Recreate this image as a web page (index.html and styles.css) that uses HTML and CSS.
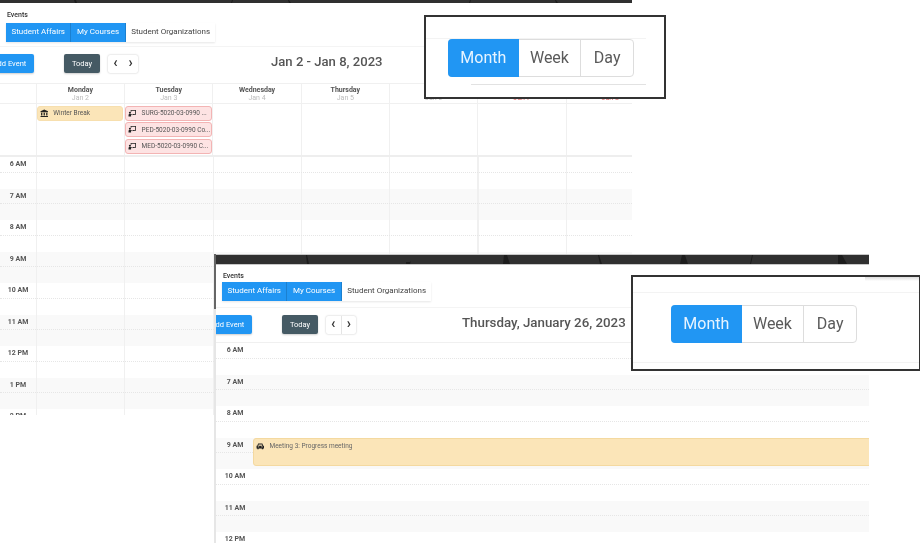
FILE: index.html
```html
<!DOCTYPE html>
<html lang="en">
<head>
    <meta charset="UTF-8">
    <meta name="viewport" content="width=device-width, initial-scale=1.0">
    <title>Events Calendar</title>
    <link rel="stylesheet" href="styles.css">
</head>
<body>
    <svg class="icon-defs" width="0" height="0" aria-hidden="true">
        <symbol id="icon-landmark" viewBox="0 0 16 16">
            <path d="M8 1l7 3v2H1V4zM2 7h2.4v5H2zM6.8 7h2.4v5H6.8zM11.600 7H14v5h-2.400zM1 13h14v2H1z"/>
        </symbol>
        <symbol id="icon-teacher" viewBox="0 0 16 16">
            <path d="M5 2h10v9H9.500v-1.400h4V3.400H6.400V5H5z"/>
            <circle cx="3.600" cy="7" r="2"/>
            <path d="M1 14v-3c0-1 .8-1.700 1.700-1.700h2L8 10.500v1.200L5.800 11v3zM8.500 10h3v1.400h-3z"/>
        </symbol>
        <symbol id="icon-car" viewBox="0 0 16 16">
            <path d="M4 3h8l1.600 4H15v5h-1.500v1.500h-2.500V12H5v1.500H2.500V12H1V7h1.400zM5 4.500L4.200 7h7.600L11 4.500zM3.500 8.500v1.500H6V8.500zM10 8.500v1.500h2.500V8.500z"/>
        </symbol>
    </svg>

    <!-- first screenshot: week view -->
    <section class="shot shot-week">
        <svg class="photo-strip" viewBox="0 0 632 3" preserveAspectRatio="none" aria-hidden="true">
            <path d="M74 0h2l1 3h-2zM232 0h1l-1 3h-1zM288 0h1l2 3h-2zM470 0h1l-1 3h-1zM555 0h1l2 3h-2z"/>
        </svg>
        <div class="events-head">
            <div class="events-label">Events</div>
            <div class="tabs">
                <span class="tab active">Student Affairs</span>
                <span class="tab active">My Courses</span>
                <span class="tab">Student Organizations</span>
            </div>
        </div>
        <div class="toolbar">
            <button class="add-btn">Add Event</button>
            <button class="today-btn">Today</button>
            <div class="pager"><span>&#8249;</span><span>&#8250;</span></div>
            <h2 class="range-title">Jan 2 - Jan 8, 2023</h2>
        </div>
        <div class="week-head">
            <div class="day-head"></div>
            <div class="day-head"><b>Monday</b><small>Jan 2</small></div>
            <div class="day-head"><b>Tuesday</b><small>Jan 3</small></div>
            <div class="day-head"><b>Wednesday</b><small>Jan 4</small></div>
            <div class="day-head"><b>Thursday</b><small>Jan 5</small></div>
            <div class="day-head"><b>Friday</b><small>Jan 6</small></div>
            <div class="day-head"><b>Saturday</b><small class="holiday">Jan 7</small></div>
            <div class="day-head"><b>Sunday</b><small class="holiday">Jan 8</small></div>
        </div>
        <div class="all-day">
            <div class="all-day-cell"></div>
            <div class="all-day-cell">
                <div class="chip chip-break"><svg class="chip-icon"><use href="#icon-landmark"/></svg><span>Winter Break</span></div>
            </div>
            <div class="all-day-cell">
                <div class="chip chip-course"><svg class="chip-icon"><use href="#icon-teacher"/></svg><span>SURG-5020-03-0990 ...</span></div>
                <div class="chip chip-course"><svg class="chip-icon"><use href="#icon-teacher"/></svg><span>PED-5020-03-0990 Co...</span></div>
                <div class="chip chip-course"><svg class="chip-icon"><use href="#icon-teacher"/></svg><span>MED-5020-03-0990 C...</span></div>
            </div>
            <div class="all-day-cell"></div>
            <div class="all-day-cell"></div>
            <div class="all-day-cell"></div>
            <div class="all-day-cell"></div>
            <div class="all-day-cell"></div>
        </div>
        <div class="hours hours-week">
            <div class="hour"><div class="slot"><span class="hour-label">6 AM</span></div></div>
            <div class="hour"><div class="slot"><span class="hour-label">7 AM</span></div></div>
            <div class="hour"><div class="slot"><span class="hour-label">8 AM</span></div></div>
            <div class="hour"><div class="slot"><span class="hour-label">9 AM</span></div></div>
            <div class="hour"><div class="slot"><span class="hour-label">10 AM</span></div></div>
            <div class="hour"><div class="slot"><span class="hour-label">11 AM</span></div></div>
            <div class="hour"><div class="slot"><span class="hour-label">12 PM</span></div></div>
            <div class="hour"><div class="slot"><span class="hour-label">1 PM</span></div></div>
            <div class="hour"><div class="slot"><span class="hour-label">2 PM</span></div></div>
        </div>
    </section>

    <!-- second screenshot: day view -->
    <section class="shot shot-day">
        <svg class="photo-strip" viewBox="0 0 653 9" preserveAspectRatio="none" aria-hidden="true">
            <path d="M90 0h1l2 9h-2zM190 7h4l1-1-1 3h-4zM288 0h3l3 9h-7zM382 0h1l3 9h-2zM466 0h3l3 9h-8zM536 0h1l-2 9h-1zM622 0h4l5 9h-9z"/>
        </svg>
        <div class="events-head">
            <div class="events-label">Events</div>
            <div class="tabs">
                <span class="tab active">Student Affairs</span>
                <span class="tab active">My Courses</span>
                <span class="tab">Student Organizations</span>
            </div>
        </div>
        <div class="toolbar">
            <button class="add-btn">Add Event</button>
            <button class="today-btn">Today</button>
            <div class="pager"><span>&#8249;</span><span>&#8250;</span></div>
            <h2 class="range-title">Thursday, January 26, 2023</h2>
        </div>
        <div class="hours hours-day">
            <div class="hour"><div class="slot"><span class="hour-label">6 AM</span></div></div>
            <div class="hour"><div class="slot"><span class="hour-label">7 AM</span></div></div>
            <div class="hour"><div class="slot"><span class="hour-label">8 AM</span></div></div>
            <div class="hour">
                <div class="slot"><span class="hour-label">9 AM</span></div>
                <div class="meeting"><svg class="chip-icon"><use href="#icon-car"/></svg><span>Meeting 3: Progress meeting</span></div>
            </div>
            <div class="hour"><div class="slot"><span class="hour-label">10 AM</span></div></div>
            <div class="hour"><div class="slot"><span class="hour-label">11 AM</span></div></div>
            <div class="hour"><div class="slot"><span class="hour-label">12 PM</span></div></div>
        </div>
    </section>

    <!-- zoomed callouts of the view switcher -->
    <aside class="callout callout-week">
        <div class="callout-line line-top"></div>
        <div class="view-switch">
            <span class="view active">Month</span>
            <span class="view view-week">Week</span>
            <span class="view view-day">Day</span>
        </div>
        <div class="callout-line line-bottom"></div>
    </aside>
    <aside class="callout callout-day">
        <div class="callout-line line-top"></div>
        <div class="view-switch">
            <span class="view active">Month</span>
            <span class="view view-week">Week</span>
            <span class="view view-day">Day</span>
        </div>
        <div class="callout-line line-bottom"></div>
    </aside>
</body>
</html>
```

FILE: styles.css
```css
* {
    box-sizing: border-box;
}
html, body {
    margin: 0;
    height: 100%;
}
body {
    position: relative;
    overflow: hidden;
    background-color: #fff;
    font-family: Roboto, "Liberation Sans", sans-serif;
    color: #444;
}
.icon-defs {
    position: absolute;
}

/* screenshots sit on a free canvas */
.shot {
    position: absolute;
    overflow: hidden;
    background-color: #fff;
    filter: blur(0.45px);
}
.shot-week {
    left: 0;
    top: 0;
    width: 632px;
    height: 415px;
}
.shot-day {
    left: 214px;
    top: 254px;
    width: 655px;
    height: 289px;
    border-left: 2px solid #e6e6e6;
    border-image: linear-gradient(#666 0 56px, #e6e6e6 56px) 1;
}
.photo-strip {
    display: block;
    width: 100%;
    background-color: #303030;
    fill: #1c1c1c;
}
.shot-week .photo-strip {
    height: 3px;
}
.shot-day .photo-strip {
    height: 11px;
    border-top: 1px solid #c8c8c8;
    border-bottom: 1px solid #c8c8c8;
}

.events-head {
    display: flex;
    flex-direction: column;
    align-items: flex-start;
    height: 44px;
    padding-left: 6px;
    border-bottom: 1px solid #f4f4f4;
}
.shot-week .events-head {
    padding-top: 9px;
}
.shot-day .events-head {
    height: 43px;
    padding-top: 8px;
}
.events-label {
    height: 11px;
    margin-left: 1px;
    font-size: 7px;
    font-weight: 500;
    line-height: 6px;
    color: #333;
}
.shot-day .events-label {
    height: 9px;
}
.tabs {
    display: flex;
    box-shadow: 0 1px 2px rgba(0, 0, 0, 0.1);
}
.tab {
    height: 18.500px;
    padding: 0 4.500px 0 5.500px;
    font-size: 8px;
    line-height: 18px;
    color: #444;
    background-color: #fff;
}
.tab.active {
    padding: 0 5.500px;
    color: #fff;
    background-color: #2196f3;
    border-right: 1px solid #1b80d0;
}

.toolbar {
    display: flex;
    align-items: flex-start;
    height: 36px;
    padding-top: 7px;
}
.shot-day .toolbar {
    height: 35px;
    border-bottom: 1px solid #f0f0f0;
}
button {
    height: 19px;
    padding: 0;
    border: none;
    border-radius: 2px;
    font-family: inherit;
    font-size: 7.500px;
    color: #fff;
    box-shadow: 0 1px 2px rgba(0, 0, 0, 0.2);
}
.add-btn {
    width: 49px;
    background-color: #2196f3;
}
.shot-week .add-btn {
    margin-left: -15px;
}
.shot-day .add-btn {
    margin-left: -13px;
}
.today-btn {
    width: 36px;
    margin-left: 30px;
    background-color: #455a64;
}
.pager {
    display: flex;
    width: 30px;
    height: 18px;
    margin: 1px 0 0 8px;
    border-radius: 2px;
    box-shadow: 0 0 2px rgba(0, 0, 0, 0.25);
}
.pager span {
    flex: 1;
    font-size: 14px;
    font-weight: 700;
    line-height: 15px;
    text-align: center;
    color: #333;
}
.shot-day .pager span + span {
    border-left: 1px solid #e4e4e4;
}
.range-title {
    margin: 0;
    font-size: 13.100px;
    font-weight: 500;
    line-height: 15px;
    color: #555;
}
.shot-week .range-title {
    margin-left: 133px;
}
.shot-day .range-title {
    margin: 0 0 0 106px;
    font-size: 13.300px;
}

.week-head, .all-day {
    display: grid;
    grid-template-columns: 36.800px repeat(7, 88.300px);
}
.week-head {
    height: 21px;
    border-top: 1px solid #f0f0f0;
    border-bottom: 1px solid #f0f0f0;
}
.day-head {
    display: flex;
    flex-direction: column;
    align-items: center;
    border-right: 1px solid #f0f0f0;
    padding-top: 2px;
    font-size: 7px;
    line-height: 8px;
}
.day-head b {
    font-weight: 700;
    color: #555;
}
.day-head small {
    font-size: 7px;
    color: #bbb;
}
.day-head small.holiday {
    color: #d66;
}
.all-day {
    height: 53px;
    border-bottom: 2px solid #eee;
}
.all-day-cell {
    display: flex;
    flex-direction: column;
    gap: 1.500px;
    padding: 1.500px 0 0;
    border-right: 1px solid #f0f0f0;
}
.chip {
    display: flex;
    align-items: center;
    height: 15px;
    border-radius: 3px;
    font-size: 6.500px;
    color: #555;
}
.chip-break {
    background-color: #fbe5b8;
    border: 1px solid #f7dfae;
    margin-right: 1px;
}
.chip-course {
    background-color: #fde3e3;
    border: 1.500px solid #f3b4b4;
}
.chip-icon {
    flex: none;
    width: 8.500px;
    height: 8.500px;
    margin: 0 5px 0 2px;
    fill: #222;
}

.hour {
    position: relative;
    height: 31.500px;
    background-repeat: no-repeat;
}
.hour:nth-child(even) {
    background-color: #f9f9f9;
}
.hours-week .hour {
    background-image: repeating-linear-gradient(90deg, #f0f0f0 0 1px, transparent 1px 88.300px);
    background-position: 35.800px 0;
}
.slot {
    height: 15.750px;
    border-bottom: 1px dotted #e6e6e6;
}
.hour-label {
    display: block;
    width: 36px;
    font-size: 7px;
    font-weight: 700;
    line-height: 14px;
    text-align: center;
    color: #555;
}
.shot-day .hour-label {
    width: 38px;
}
.meeting {
    position: absolute;
    top: 0;
    left: 37px;
    right: -4px;
    display: flex;
    align-items: flex-start;
    height: 28px;
    padding-top: 3px;
    border: 1px solid #f4d9a0;
    border-radius: 3px;
    background-color: #fbe5b8;
    font-size: 6.500px;
    line-height: 8px;
    color: #666;
}

/* callouts lie over the screenshots */
.callout {
    position: absolute;
    background-color: #fff;
    border: 2px solid #333;
    filter: blur(0.3px);
}
.callout-week {
    left: 424px;
    top: 15px;
    width: 242px;
    height: 84px;
}
.callout-day {
    left: 631px;
    top: 275px;
    width: 289px;
    height: 96px;
    border-right-width: 1px;
    background-image: linear-gradient(#ddd, #fff);
    background-repeat: no-repeat;
    background-size: 54px 4px;
    background-position: top right;
}
.callout-line {
    border-top: 1px solid #f3f3f3;
}
.callout-week .line-top {
    margin: 21px 18px 0 0;
}
.callout-week .line-bottom {
    margin: 7px 18px 0 45px;
    border-top-color: #e2e2e2;
}
.callout-day .line-top {
    margin-top: 15px;
}
.callout-day .line-bottom {
    margin-top: 19px;
}
.view-switch {
    display: flex;
    width: 186px;
    height: 38px;
    border: 1px solid #ddd;
    border-radius: 4px;
    font-size: 16px;
    line-height: 36px;
    color: #5a5a5a;
    text-align: center;
}
.callout-week .view-switch {
    margin: 0 0 0 22px;
}
.callout-day .view-switch {
    margin: 12px 0 0 38px;
}
.view {
    width: 52px;
}
.view.active {
    width: 71px;
    margin: -1px 0 -1px -1px;
    line-height: 38px;
    color: #e8f4ff;
    background-color: #2196f3;
    border-radius: 4px 0 0 4px;
}
.view.view-week {
    width: 63px;
    border-right: 1px solid #ddd;
}
```
